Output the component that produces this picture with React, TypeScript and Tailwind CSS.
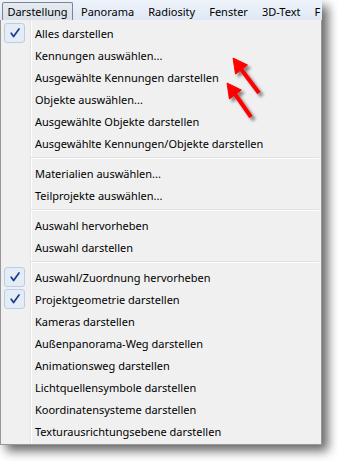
import React from "react";

type Item = { label: string; checked?: boolean } | "sep";

const items: Item[] = [
  { label: "Alles darstellen", checked: true },
  { label: "Kennungen auswählen..." },
  { label: "Ausgewählte Kennungen darstellen" },
  { label: "Objekte auswählen..." },
  { label: "Ausgewählte Objekte darstellen" },
  { label: "Ausgewählte Kennungen/Objekte darstellen" },
  "sep",
  { label: "Materialien auswählen..." },
  { label: "Teilprojekte auswählen..." },
  "sep",
  { label: "Auswahl hervorheben" },
  { label: "Auswahl darstellen" },
  "sep",
  { label: "Auswahl/Zuordnung hervorheben", checked: true },
  { label: "Projektgeometrie darstellen", checked: true },
  { label: "Kameras darstellen" },
  { label: "Außenpanorama-Weg darstellen" },
  { label: "Animationsweg darstellen" },
  { label: "Lichtquellensymbole darstellen" },
  { label: "Koordinatensysteme darstellen" },
  { label: "Texturausrichtungsebene darstellen" },
];

const barItems = ["Panorama", "Radiosity", "Fenster", "3D-Text", "F"];

function Check() {
  return (
    <div className="ml-[3px] flex h-[20px] w-[21px] items-center justify-center rounded-[3px] border border-[#b9cde6] bg-[#e4ecf6]">
      <svg width="12" height="12" viewBox="0 0 12 12">
        <path d="M2.2 6.2 L4.6 9.6 L10 2" fill="none" stroke="#1b3a8c" strokeWidth="1.7" strokeLinejoin="round" strokeLinecap="round" />
      </svg>
    </div>
  );
}

export default function App() {
  return (
    <div className="relative h-[461px] w-[338px] overflow-hidden bg-white" style={{ fontFamily: '"Noto Sans", "Open Sans", sans-serif' }}>
      <div className="w-[322px] shadow-[6px_6px_10px_rgba(0,0,0,0.6)]">
        {/* menu bar */}
        <div className="flex h-[20px] items-end overflow-hidden bg-[linear-gradient(to_bottom,#eef3fa,#dfe8f5)] pl-[2px] text-[11px] text-black">
          <div className="flex h-[18px] w-[71px] items-center justify-center rounded-t-[2px] border border-b-0 border-[#7a8594] bg-[linear-gradient(to_bottom,#e6ebf1,#d9e0e9)] leading-none">
            Darstellung
          </div>
          <div className="flex h-[18px] items-center whitespace-nowrap pl-[8px] leading-none">Panorama</div>
          <div className="flex h-[18px] items-center whitespace-nowrap pl-[14px] leading-none">Radiosity</div>
          <div className="flex h-[18px] items-center whitespace-nowrap pl-[14px] leading-none">Fenster</div>
          <div className="flex h-[18px] items-center whitespace-nowrap pl-[14px] leading-none">3D-Text</div>
          <div className="flex h-[18px] items-center whitespace-nowrap pl-[14px] leading-none">F</div>
        </div>
        {/* menu panel */}
        <div className="border border-t-0 border-[#979797] bg-[linear-gradient(to_right,#f0f0f0_29px,#e2e3e3_29px,#e2e3e3_30px,#ffffff_30px,#ffffff_31px,#f0f0f0_31px)] py-[2px] text-[11px] text-[#000000]">
          {items.map((it, i) =>
            it === "sep" ? (
              <div key={i} className="flex h-[8px] flex-col justify-center pl-[30px] pr-[2px]">
                <div className="h-px bg-[#e0e0e0]" />
                <div className="h-px bg-white" />
              </div>
            ) : (
              <div key={i} className="flex h-[22px] items-center">
                <div className="flex w-[34px] items-center">{it.checked ? <Check /> : null}</div>
                <span className="whitespace-nowrap leading-none">{it.label}</span>
              </div>
            )
          )}
        </div>
      </div>
      {/* red arrows */}
      <svg className="pointer-events-none absolute left-0 top-0" width="338" height="461">
        <defs>
          <filter id="sh" x="-50%" y="-50%" width="200%" height="200%">
            <feDropShadow dx="3" dy="3" stdDeviation="1.5" floodColor="#000" floodOpacity="0.45" />
          </filter>
        </defs>
        <g filter="url(#sh)" fill="#ff0000" stroke="#ff0000">
          <line x1="259" y1="93" x2="241" y2="69" strokeWidth="4" />
          <polygon points="233,58 247.5,65 235.5,74" strokeWidth="1" />
          <line x1="251" y1="117" x2="235" y2="94" strokeWidth="4" />
          <polygon points="227,83 241.3,90 229.4,99" strokeWidth="1" />
        </g>
      </svg>
    </div>
  );
}
